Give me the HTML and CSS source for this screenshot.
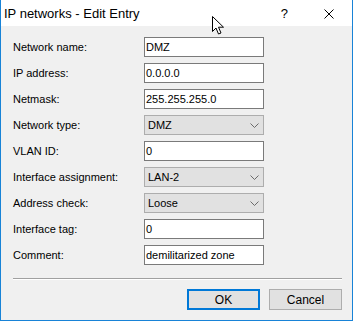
FILE: index.html
```html
<!DOCTYPE html>
<html>
<head>
<meta charset="utf-8">
<link rel="stylesheet" href="styles.css">
</head>
<body>
<div class="window">
  <div class="titlebar">
    <span class="title">IP networks - Edit Entry</span>
    <span class="help">?</span>
    <svg class="close" width="10" height="10" viewBox="0 0 10 10"><path d="M0.5 0.5 L9.5 9.5 M9.5 0.5 L0.5 9.5" stroke="#000" stroke-width="1" fill="none"/></svg>
  </div>
  <div class="content">
    <div class="form">
      <label class="lbl">Network name:</label><div class="field">DMZ</div>
      <label class="lbl">IP address:</label><div class="field">0.0.0.0</div>
      <label class="lbl">Netmask:</label><div class="field">255.255.255.0</div>
      <label class="lbl">Network type:</label><div class="field select">DMZ<svg class="chev" width="9" height="5" viewBox="0 0 9 5"><path d="M0.5 0.5 L4.5 4.5 L8.5 0.5" stroke="#6b6b6b" fill="none"/></svg></div>
      <label class="lbl">VLAN ID:</label><div class="field">0</div>
      <label class="lbl">Interface assignment:</label><div class="field select">LAN-2<svg class="chev" width="9" height="5" viewBox="0 0 9 5"><path d="M0.5 0.5 L4.5 4.5 L8.5 0.5" stroke="#6b6b6b" fill="none"/></svg></div>
      <label class="lbl">Address check:</label><div class="field select">Loose<svg class="chev" width="9" height="5" viewBox="0 0 9 5"><path d="M0.5 0.5 L4.5 4.5 L8.5 0.5" stroke="#6b6b6b" fill="none"/></svg></div>
      <label class="lbl">Interface tag:</label><div class="field">0</div>
      <label class="lbl">Comment:</label><div class="field">demilitarized zone</div>
    </div>
    <div class="sep"></div>
    <div class="buttons">
      <div class="btn default">OK</div>
      <div class="btn">Cancel</div>
    </div>
  </div>
  <svg class="cursor" width="13" height="20" viewBox="0 0 13 20"><path d="M0.5 0.5 L0.5 15.5 L4 12 L6.5 18 L9 17 L6.5 11.2 L11.5 11.2 Z" fill="#fff" stroke="#000" stroke-width="1" stroke-linejoin="miter"/></svg>
</div>
</body>
</html>
```
FILE: styles.css
```css
html, body {
  margin: 0;
  padding: 0;
  background: #fff;
}
.window {
  position: relative;
  width: 353px;
  height: 321px;
  box-sizing: border-box;
  border: 1px solid #1883d7;
  border-top: none;
  background: #f0f0f0;
  display: flex;
  flex-direction: column;
  font-family: "Liberation Sans", Arial, sans-serif;
  font-size: 11px;
  color: #000;
}
.titlebar {
  height: 26px;
  background: #fff;
  display: flex;
  align-items: center;
  position: relative;
}
.title {
  font-size: 13px;
  padding-left: 3px;
  margin-top: 1px;
  flex: 1;
}
.help {
  font-size: 13px;
  margin-right: 36px;
  margin-top: 1px;
}
.close {
  margin-right: 18px;
  margin-top: 1px;
}
.content {
  flex: 1;
  display: flex;
  flex-direction: column;
  padding: 11px 10px 0 11px;
}
.form {
  display: grid;
  grid-template-columns: 132px 120px;
  row-gap: 6px;
  align-items: center;
}
.lbl {
  line-height: 20px;
  padding-left: 1px;
}
.field {
  height: 20px;
  box-sizing: border-box;
  border: 1px solid #7a7a7a;
  background: #fff;
  padding-left: 1px;
  line-height: 18px;
  display: flex;
  align-items: center;
}
.field.select {
  background: #e1e1e1;
  border-color: #adadad;
  padding-left: 3px;
  justify-content: space-between;
  padding-right: 4px;
}
.chev {
  display: block;
}
.sep {
  margin-top: 13px;
  margin-left: 1px;
  margin-right: 0;
  height: 1px;
  border-top: 1px solid #a0a0a0;
  background: #fff;
}
.buttons {
  display: flex;
  justify-content: flex-end;
  gap: 9px;
  margin-top: 9px;
}
.btn {
  width: 73px;
  height: 21px;
  box-sizing: border-box;
  border: 1px solid #adadad;
  background: #e1e1e1;
  display: flex;
  align-items: center;
  justify-content: center;
  font-size: 12px;
}
.btn.default {
  border: 2px solid #0078d7;
}
.cursor {
  position: absolute;
  left: 211px;
  top: 16px;
}
```
